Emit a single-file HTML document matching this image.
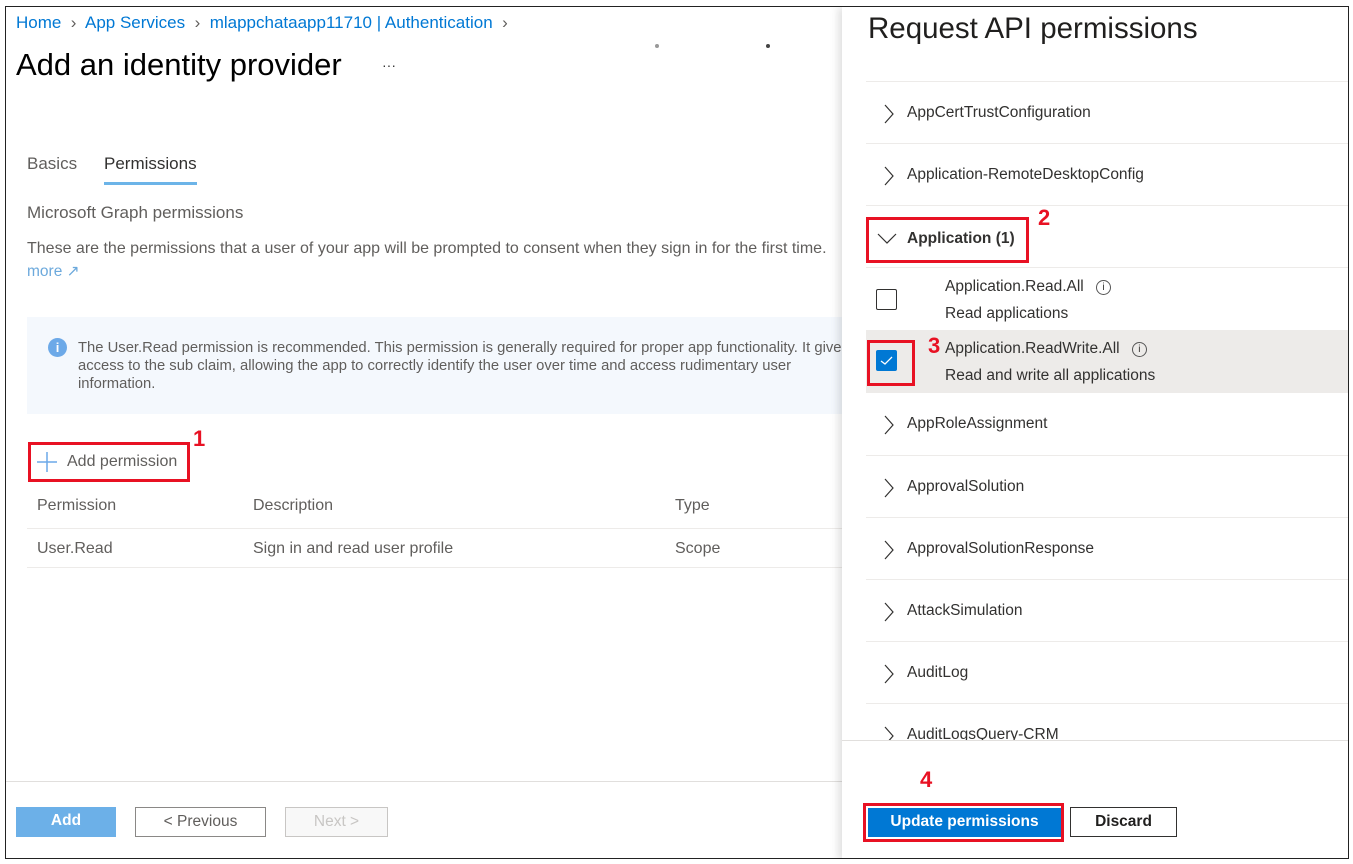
<!DOCTYPE html>
<html><head><meta charset="utf-8"><style>
*{margin:0;padding:0;box-sizing:border-box}
body{width:1353px;height:864px;background:#fff;font-family:"Liberation Sans",sans-serif;position:relative;overflow:hidden;color:#323130}
.frame{position:absolute;left:5px;top:6px;width:1344px;height:853px;border:1px solid #222;overflow:hidden;background:#fff}
.a{position:absolute;white-space:nowrap}
.red{position:absolute;border:3px solid #e81123}
.num{position:absolute;color:#e81123;font-weight:bold;font-size:22px}
.panel{position:absolute;left:836px;top:0;width:508px;height:853px;background:#fff;box-shadow:-4px 0 8px rgba(0,0,0,.12)}
.row{position:absolute;left:24px;right:0;border-top:1px solid #edebe9;height:62px}
.row span{position:absolute;left:41px;top:22px;font-size:15.5px;color:#323130}
.chev{position:absolute;left:18px;top:22px}
.btn{position:absolute;height:30px;font-size:15.5px;text-align:center;line-height:28px}
</style></head><body>
<div class="frame">
<div class="a" style="left:10px;top:6px;font-size:17px;color:#0078d4">Home &nbsp;<span style="color:#605e5c">&#8250;</span>&nbsp; App Services &nbsp;<span style="color:#605e5c">&#8250;</span>&nbsp; mlappchataapp11710 | Authentication &nbsp;<span style="color:#605e5c">&#8250;</span></div>
<div class="a" style="left:10px;top:40px;font-size:31px;color:#000">Add an identity provider</div>
<div class="a" style="left:376px;top:50px;font-size:14px;color:#333">···</div>
<div class="a" style="left:649px;top:37px;width:4px;height:4px;border-radius:2px;background:#999"></div>
<div class="a" style="left:760px;top:37px;width:4px;height:4px;border-radius:2px;background:#444"></div>
<div class="a" style="left:21px;top:147px;font-size:17px;color:#605e5c">Basics</div>
<div class="a" style="left:98px;top:147px;font-size:17px;color:#323130">Permissions</div>
<div class="a" style="left:98px;top:175px;width:93px;height:3px;background:#6cb4e8"></div>
<div class="a" style="left:21px;top:196px;font-size:17px;color:#605e5c">Microsoft Graph permissions</div>
<div class="a" style="left:21px;top:233px;font-size:16px;color:#605e5c">These are the permissions that a user of your app will be prompted to consent when they sign in for the first time.</div>
<div class="a" style="left:21px;top:255px;font-size:15.5px;color:#6ca9dc">more &#x2197;</div>
<div class="a" style="left:21px;top:310px;width:820px;height:97px;background:#f4f8fd"></div>
<div class="a" style="left:42px;top:331px;width:19px;height:19px;border-radius:50%;background:#6ca9e8;color:#fff;font-size:13px;font-weight:bold;text-align:center;line-height:19px">i</div>
<div class="a" style="left:72px;top:332px;font-size:14.8px;color:#605e5c;line-height:18px">The User.Read permission is recommended. This permission is generally required for proper app functionality. It give<br>access to the sub claim, allowing the app to correctly identify the user over time and access rudimentary user<br>information.</div>
<svg class="a" style="left:31px;top:445px" width="20" height="20"><path d="M10 0v20M0 10h20" stroke="#6ca9e8" stroke-width="1.5"/></svg>
<div class="a" style="left:61px;top:446px;font-size:16px;color:#605e5c">Add permission</div>
<div class="red" style="left:22px;top:435px;width:162px;height:40px"></div>
<div class="num" style="left:187px;top:419px">1</div>
<div class="a" style="left:31px;top:490px;font-size:16px;color:#605e5c">Permission</div>
<div class="a" style="left:247px;top:490px;font-size:16px;color:#605e5c">Description</div>
<div class="a" style="left:669px;top:490px;font-size:16px;color:#605e5c">Type</div>
<div class="a" style="left:21px;top:521px;width:820px;height:1px;background:#edebe9"></div>
<div class="a" style="left:31px;top:533px;font-size:16px;color:#605e5c">User.Read</div>
<div class="a" style="left:247px;top:533px;font-size:16px;color:#605e5c">Sign in and read user profile</div>
<div class="a" style="left:669px;top:533px;font-size:16px;color:#605e5c">Scope</div>
<div class="a" style="left:21px;top:560px;width:820px;height:1px;background:#edebe9"></div>
<div class="a" style="left:0;top:774px;width:840px;height:1px;background:#e1dfdd"></div>
<div class="btn" style="left:10px;top:800px;width:100px;background:#6cb0e8;color:#fff;font-weight:bold">Add</div>
<div class="btn" style="left:129px;top:800px;width:131px;border:1px solid #8a8886;color:#605e5c">&lt; Previous</div>
<div class="btn" style="left:279px;top:800px;width:103px;border:1px solid #c8c6c4;color:#c8c6c4;background:#f8f8f8">Next &gt;</div>

<div class="panel">
<div class="a" style="left:26px;top:5px;font-size:29.5px;color:#201f1e">Request API permissions</div>
<div class="row" style="top:74px"><svg class="chev" width="10" height="20"><path d="M1 1l8 9-8 9" fill="none" stroke="#323130" stroke-width="1.2"/></svg><span>AppCertTrustConfiguration</span></div>
<div class="row" style="top:136px"><svg class="chev" width="10" height="20"><path d="M1 1l8 9-8 9" fill="none" stroke="#323130" stroke-width="1.2"/></svg><span>Application-RemoteDesktopConfig</span></div>
<div class="row" style="top:198px"><svg class="chev" style="left:11px;top:27px" width="20" height="11"><path d="M1 1l9 9 9-9" fill="none" stroke="#323130" stroke-width="1.2"/></svg><span style="font-weight:bold;left:41px;top:24px">Application (1)</span></div>
<div class="red" style="left:24px;top:210px;width:163px;height:46px"></div>
<div class="num" style="left:196px;top:198px">2</div>
<div class="row" style="top:260px;height:62px"></div>
<div class="a" style="left:34px;top:282px;width:21px;height:21px;border:1px solid #323130;border-radius:2px"></div>
<div class="a" style="left:103px;top:271px;font-size:15.5px">Application.Read.All <span style="display:inline-block;width:15px;height:15px;border:1px solid #555;border-radius:50%;font-size:10px;text-align:center;line-height:13px;margin-left:8px;vertical-align:1px">i</span></div>
<div class="a" style="left:103px;top:298px;font-size:15.5px">Read applications</div>
<div class="a" style="left:24px;top:323px;width:484px;height:62px;background:#edebe9"></div>
<div class="a" style="left:34px;top:343px;width:21px;height:21px;background:#0078d4;border-radius:2px"><svg width="21" height="21"><path d="M5 11l4 3 7-7" fill="none" stroke="#fff" stroke-width="1.3"/></svg></div>
<div class="red" style="left:25px;top:333px;width:48px;height:46px"></div>
<div class="num" style="left:86px;top:326px">3</div>
<div class="a" style="left:103px;top:333px;font-size:15.5px">Application.ReadWrite.All <span style="display:inline-block;width:15px;height:15px;border:1px solid #555;border-radius:50%;font-size:10px;text-align:center;line-height:13px;margin-left:8px;vertical-align:1px">i</span></div>
<div class="a" style="left:103px;top:360px;font-size:15.5px">Read and write all applications</div>
<div class="row" style="top:385px"><svg class="chev" width="10" height="20"><path d="M1 1l8 9-8 9" fill="none" stroke="#323130" stroke-width="1.2"/></svg><span>AppRoleAssignment</span></div>
<div class="row" style="top:448px"><svg class="chev" width="10" height="20"><path d="M1 1l8 9-8 9" fill="none" stroke="#323130" stroke-width="1.2"/></svg><span>ApprovalSolution</span></div>
<div class="row" style="top:510px"><svg class="chev" width="10" height="20"><path d="M1 1l8 9-8 9" fill="none" stroke="#323130" stroke-width="1.2"/></svg><span>ApprovalSolutionResponse</span></div>
<div class="row" style="top:572px"><svg class="chev" width="10" height="20"><path d="M1 1l8 9-8 9" fill="none" stroke="#323130" stroke-width="1.2"/></svg><span>AttackSimulation</span></div>
<div class="row" style="top:634px"><svg class="chev" width="10" height="20"><path d="M1 1l8 9-8 9" fill="none" stroke="#323130" stroke-width="1.2"/></svg><span>AuditLog</span></div>
<div class="row" style="top:696px;height:38px;overflow:hidden"><svg class="chev" width="10" height="20"><path d="M1 1l8 9-8 9" fill="none" stroke="#323130" stroke-width="1.2"/></svg><span>AuditLogsQuery-CRM</span></div>
<div class="a" style="left:0;top:733px;width:508px;height:1px;background:#e1dfdd"></div>
<div class="num" style="left:78px;top:760px">4</div>
<div class="red" style="left:21px;top:796px;width:201px;height:39px"></div>
<div class="btn" style="left:26px;top:801px;width:193px;height:29px;background:#0078d4;color:#fff;font-weight:bold">Update permissions</div>
<div class="btn" style="left:228px;top:800px;width:107px;border:1px solid #323130;color:#201f1e;font-weight:bold">Discard</div>
</div>
</div>
</body></html>
